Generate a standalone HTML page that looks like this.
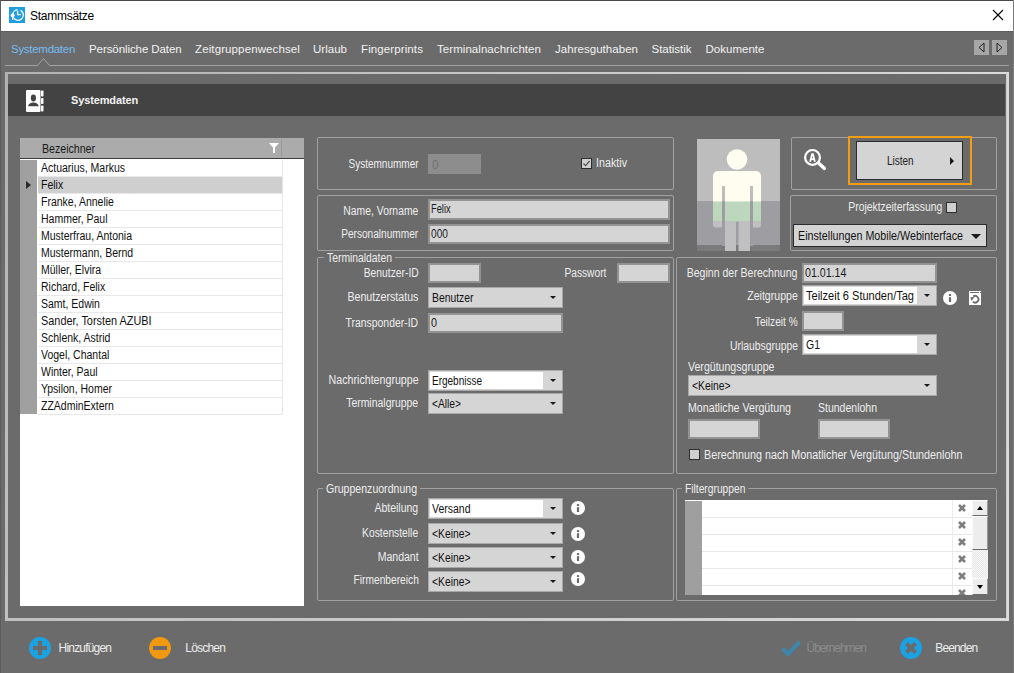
<!DOCTYPE html>
<html><head><meta charset="utf-8"><style>
html,body{margin:0;padding:0;width:1014px;height:673px;overflow:hidden;background:#6b6b6b}
body{position:relative;font-family:"Liberation Sans",sans-serif}
body>div,body>span,body>svg{position:absolute;box-sizing:content-box}
.t{white-space:nowrap;line-height:16px}
</style></head><body>
<div style="left:0px;top:0px;width:1014px;height:673px;background:#6b6b6b"></div>
<div style="left:0px;top:0px;width:1014px;height:1px;background:#4a4a4a"></div>
<div style="left:0px;top:0px;width:1px;height:673px;background:#5c5c5c"></div>
<div style="left:1013px;top:0px;width:1px;height:673px;background:#7c7c7c"></div>
<div style="left:1px;top:1px;width:1012px;height:30px;background:#ffffff"></div>
<div style="left:1px;top:31px;width:1012px;height:1px;background:#5f5f5f"></div>
<svg style="left:9px;top:7px" width="16" height="16" viewBox="0 0 16 16"><rect width="16" height="16" fill="#1e9ee0"/><circle cx="9" cy="8" r="5.3" fill="none" stroke="#fff" stroke-width="1.2" stroke-dasharray="24 3"/><path d="M8.6 3.8V7.6H11.8" fill="none" stroke="#fff" stroke-width="1.3"/><circle cx="3.6" cy="8.2" r="2" fill="#fff"/><rect x="3.1" y="9.5" width="1" height="3.5" fill="#fff"/></svg>
<span class="t" style="top:8px;font-size:12px;color:#000;letter-spacing:-0.269px;left:30px;">Stammsätze</span>
<svg style="left:992px;top:9px" width="12" height="12" viewBox="0 0 12 12"><path d="M1 1L11 11M11 1L1 11" stroke="#000" stroke-width="1.1"/></svg>
<span class="t" style="top:41px;font-size:11.5px;color:#74bdf2;letter-spacing:-0.283px;left:11px;">Systemdaten</span>
<span class="t" style="top:41px;font-size:11.5px;color:#f2f2f2;letter-spacing:-0.080px;left:89px;">Persönliche Daten</span>
<span class="t" style="top:41px;font-size:11.5px;color:#f2f2f2;letter-spacing:0.116px;left:195px;">Zeitgruppenwechsel</span>
<span class="t" style="top:41px;font-size:11.5px;color:#f2f2f2;letter-spacing:0.021px;left:313px;">Urlaub</span>
<span class="t" style="top:41px;font-size:11.5px;color:#f2f2f2;letter-spacing:0.107px;left:361px;">Fingerprints</span>
<span class="t" style="top:41px;font-size:11.5px;color:#f2f2f2;letter-spacing:0.058px;left:437px;">Terminalnachrichten</span>
<span class="t" style="top:41px;font-size:11.5px;color:#f2f2f2;letter-spacing:0.037px;left:555px;">Jahresguthaben</span>
<span class="t" style="top:41px;font-size:11.5px;color:#f2f2f2;letter-spacing:-0.029px;left:651.5px;">Statistik</span>
<span class="t" style="top:41px;font-size:11.5px;color:#f2f2f2;letter-spacing:0.022px;left:705.5px;">Dokumente</span>
<svg style="left:0;top:55px" width="1014" height="14" viewBox="0 0 1014 14"><path d="M5 10.5H37.5L43.5 3.5L49.5 10.5H1009" fill="none" stroke="#a2a2a2" stroke-width="1"/></svg>
<svg style="left:974px;top:40px" width="15" height="15" viewBox="0 0 15 15"><rect width="15" height="15" fill="#a6a6a6"/><path d="M10 3L5 7.5L10 12Z" fill="none" stroke="#222" stroke-width="1"/></svg>
<svg style="left:992px;top:40px" width="15" height="15" viewBox="0 0 15 15"><rect width="15" height="15" fill="#a6a6a6"/><path d="M5 3L10 7.5L5 12Z" fill="none" stroke="#222" stroke-width="1"/></svg>
<div style="left:5px;top:72px;width:1004px;height:2px;background:linear-gradient(90deg,#b2b2b2,#dadada)"></div>
<div style="left:5px;top:618px;width:1004px;height:3px;background:linear-gradient(90deg,#c0c0c0,#dadada)"></div>
<div style="left:5px;top:72px;width:3px;height:549px;background:linear-gradient(180deg,#b2b2b2,#c0c0c0)"></div>
<div style="left:1006px;top:72px;width:3px;height:549px;background:linear-gradient(180deg,#d8d8d8,#dcdcdc)"></div>
<div style="left:1006px;top:74px;width:1px;height:544px;background:#cacaca"></div>
<div style="left:8px;top:84px;width:997px;height:32px;background:#434343"></div>
<svg style="left:25px;top:89px" width="20" height="24" viewBox="0 0 20 24"><rect x="1" y="1" width="14.5" height="22" rx="1" fill="#fff"/><rect x="16" y="1.5" width="2.5" height="6" rx="0.8" fill="#fff"/><rect x="16" y="9" width="2.5" height="6" rx="0.8" fill="#fff"/><rect x="16" y="16.5" width="2.5" height="6" rx="0.8" fill="#fff"/><ellipse cx="8.4" cy="9" rx="2.6" ry="3.4" fill="#434343"/><path d="M3 17.2C3.8 14.5 5.5 13.4 8.4 13.4C11.3 13.4 13 14.5 13.8 17.2Z" fill="#434343"/></svg>
<span class="t" style="top:92px;font-size:11px;color:#f2f2f2;font-weight:bold;letter-spacing:-0.133px;left:71px;">Systemdaten</span>
<div style="left:20px;top:138px;width:284px;height:468px;background:#fff"></div>
<div style="left:20px;top:138px;width:284px;height:20px;background:#ababab"></div>
<div style="left:281px;top:139px;width:1px;height:18px;background:#9a9a9a"></div>
<div style="left:20px;top:158px;width:284px;height:1px;background:#3a3a3a"></div>
<svg style="left:269px;top:143px" width="10" height="10" viewBox="0 0 10 10"><path d="M0 0H10L6 4.5V10H4V4.5Z" fill="#fff"/></svg>
<span class="t" style="top:141px;font-size:12px;color:#1a1a1a;transform:scaleX(0.8828);transform-origin:left top;left:42px;">Bezeichner</span>
<div style="left:20px;top:160px;width:17px;height:254px;background:#a0a0a0"></div>
<div style="left:282px;top:160px;width:1px;height:254px;background:#e6e6e6"></div>
<div style="left:38px;top:176px;width:244px;height:1px;background:#e8e8e8"></div>
<span class="t" style="top:160px;font-size:12px;color:#111;transform:scaleX(0.8750);transform-origin:left top;left:41px;">Actuarius, Markus</span>
<div style="left:38px;top:177px;width:244px;height:16px;background:#cfcfcf"></div>
<div style="left:38px;top:193px;width:244px;height:1px;background:#e8e8e8"></div>
<span class="t" style="top:177px;font-size:12px;color:#111;transform:scaleX(0.8750);transform-origin:left top;left:41px;">Felix</span>
<div style="left:38px;top:210px;width:244px;height:1px;background:#e8e8e8"></div>
<span class="t" style="top:194px;font-size:12px;color:#111;transform:scaleX(0.8750);transform-origin:left top;left:41px;">Franke, Annelie</span>
<div style="left:38px;top:227px;width:244px;height:1px;background:#e8e8e8"></div>
<span class="t" style="top:211px;font-size:12px;color:#111;transform:scaleX(0.8750);transform-origin:left top;left:41px;">Hammer, Paul</span>
<div style="left:38px;top:244px;width:244px;height:1px;background:#e8e8e8"></div>
<span class="t" style="top:228px;font-size:12px;color:#111;transform:scaleX(0.8749);transform-origin:left top;left:41px;">Musterfrau, Antonia</span>
<div style="left:38px;top:261px;width:244px;height:1px;background:#e8e8e8"></div>
<span class="t" style="top:245px;font-size:12px;color:#111;transform:scaleX(0.8749);transform-origin:left top;left:41px;">Mustermann, Bernd</span>
<div style="left:38px;top:278px;width:244px;height:1px;background:#e8e8e8"></div>
<span class="t" style="top:262px;font-size:12px;color:#111;transform:scaleX(0.8750);transform-origin:left top;left:41px;">Müller, Elvira</span>
<div style="left:38px;top:295px;width:244px;height:1px;background:#e8e8e8"></div>
<span class="t" style="top:279px;font-size:12px;color:#111;transform:scaleX(0.8750);transform-origin:left top;left:41px;">Richard, Felix</span>
<div style="left:38px;top:312px;width:244px;height:1px;background:#e8e8e8"></div>
<span class="t" style="top:296px;font-size:12px;color:#111;transform:scaleX(0.8750);transform-origin:left top;left:41px;">Samt, Edwin</span>
<div style="left:38px;top:329px;width:244px;height:1px;background:#e8e8e8"></div>
<span class="t" style="top:313px;font-size:12px;color:#111;transform:scaleX(0.9077);transform-origin:left top;left:41px;">Sander, Torsten AZUBI</span>
<div style="left:38px;top:346px;width:244px;height:1px;background:#e8e8e8"></div>
<span class="t" style="top:330px;font-size:12px;color:#111;transform:scaleX(0.8750);transform-origin:left top;left:41px;">Schlenk, Astrid</span>
<div style="left:38px;top:363px;width:244px;height:1px;background:#e8e8e8"></div>
<span class="t" style="top:347px;font-size:12px;color:#111;transform:scaleX(0.8750);transform-origin:left top;left:41px;">Vogel, Chantal</span>
<div style="left:38px;top:380px;width:244px;height:1px;background:#e8e8e8"></div>
<span class="t" style="top:364px;font-size:12px;color:#111;transform:scaleX(0.8750);transform-origin:left top;left:41px;">Winter, Paul</span>
<div style="left:38px;top:397px;width:244px;height:1px;background:#e8e8e8"></div>
<span class="t" style="top:381px;font-size:12px;color:#111;transform:scaleX(0.8750);transform-origin:left top;left:41px;">Ypsilon, Homer</span>
<div style="left:38px;top:414px;width:244px;height:1px;background:#e8e8e8"></div>
<span class="t" style="top:398px;font-size:12px;color:#111;transform:scaleX(0.8750);transform-origin:left top;left:41px;">ZZAdminExtern</span>
<div style="left:26px;top:181px;width:0;height:0;border-top:4.5px solid transparent;border-bottom:4.5px solid transparent;border-left:5px solid #2a2a2a"></div>
<div style="left:317px;top:137px;width:355px;height:51px;border:1px solid #a0a0a0;border-radius:2px"></div>
<span class="t" style="top:156px;font-size:12.5px;color:#eeeeee;transform:scaleX(0.7998);transform-origin:right top;right:595.5px;">Systemnummer</span>
<div style="left:428px;top:154px;width:53px;height:20px;background:#8d8d8d"></div>
<span class="t" style="top:157px;font-size:12px;color:#727272;left:432px;">0</span>
<div style="left:581px;top:158px;width:9px;height:9px;border:1px solid #2e2e2e;background:#cfcfcf"></div>
<svg style="left:582px;top:159px" width="9" height="9" viewBox="0 0 9 9"><path d="M1.5 4.5L3.6 6.6L7.6 2" fill="none" stroke="#555" stroke-width="1.2"/></svg>
<span class="t" style="top:155px;font-size:12.5px;color:#eeeeee;transform:scaleX(0.8581);transform-origin:left top;left:595.5px;">Inaktiv</span>
<div style="left:317px;top:195px;width:355px;height:54px;border:1px solid #a0a0a0;border-radius:2px"></div>
<span class="t" style="top:203px;font-size:12.5px;color:#eeeeee;transform:scaleX(0.8304);transform-origin:right top;right:595.5px;">Name, Vorname</span>
<div style="left:428px;top:199px;width:238px;height:17px;border:2px solid #939393;background:#d5d5d5"></div>
<span class="t" style="top:201px;font-size:12px;color:#1a1a1a;transform:scaleX(0.7737);transform-origin:left top;left:431px;">Felix</span>
<span class="t" style="top:226px;font-size:12.5px;color:#eeeeee;transform:scaleX(0.8090);transform-origin:right top;right:595.5px;">Personalnummer</span>
<div style="left:428px;top:224px;width:238px;height:16px;border:2px solid #939393;background:#d5d5d5"></div>
<span class="t" style="top:226px;font-size:12px;color:#1a1a1a;transform:scaleX(0.8491);transform-origin:left top;left:431px;">000</span>
<div style="left:317px;top:257px;width:355px;height:215px;border:1px solid #a0a0a0;border-radius:2px"></div>
<div style="left:324px;top:256px;width:71px;height:3px;background:#6b6b6b"></div>
<span class="t" style="top:250px;font-size:12.5px;color:#eeeeee;transform:scaleX(0.8279);transform-origin:left top;left:327px;">Terminaldaten</span>
<span class="t" style="top:265px;font-size:12.5px;color:#eeeeee;transform:scaleX(0.8247);transform-origin:right top;right:595.5px;">Benutzer-ID</span>
<div style="left:428px;top:263px;width:49px;height:16px;border:2px solid #939393;background:#d5d5d5"></div>
<span class="t" style="top:265px;font-size:12.5px;color:#eeeeee;transform:scaleX(0.8171);transform-origin:right top;right:407.5px;">Passwort</span>
<div style="left:617px;top:263px;width:49px;height:16px;border:2px solid #939393;background:#d5d5d5"></div>
<span class="t" style="top:289px;font-size:12.5px;color:#eeeeee;transform:scaleX(0.8515);transform-origin:right top;right:595.5px;">Benutzerstatus</span>
<div style="left:428px;top:287px;width:133px;height:19px;border:1px solid #a8a8a8;background:#d5d5d5"></div>
<span class="t" style="top:290px;font-size:12px;color:#111;transform:scaleX(0.8640);transform-origin:left top;left:432px;">Benutzer</span>
<div style="left:550px;top:296px;width:0;height:0;border-left:3px solid transparent;border-right:3px solid transparent;border-top:3px solid #1a1a1a"></div>
<span class="t" style="top:315px;font-size:12.5px;color:#eeeeee;transform:scaleX(0.8327);transform-origin:right top;right:595.5px;">Transponder-ID</span>
<div style="left:428px;top:313px;width:131px;height:16px;border:2px solid #939393;background:#d5d5d5"></div>
<span class="t" style="top:315px;font-size:12px;color:#1a1a1a;transform:scaleX(0.8991);transform-origin:left top;left:431px;">0</span>
<span class="t" style="top:372px;font-size:12.5px;color:#eeeeee;transform:scaleX(0.8521);transform-origin:right top;right:595.5px;">Nachrichtengruppe</span>
<div style="left:428px;top:370px;width:133px;height:19px;border:1px solid #a8a8a8;background:#d5d5d5"></div>
<div style="left:430px;top:372px;width:113px;height:17px;background:#fff"></div>
<span class="t" style="top:373px;font-size:12px;color:#111;transform:scaleX(0.8329);transform-origin:left top;left:432px;">Ergebnisse</span>
<div style="left:550px;top:379px;width:0;height:0;border-left:3px solid transparent;border-right:3px solid transparent;border-top:3px solid #1a1a1a"></div>
<span class="t" style="top:395px;font-size:12.5px;color:#eeeeee;transform:scaleX(0.8357);transform-origin:right top;right:595.5px;">Terminalgruppe</span>
<div style="left:428px;top:393px;width:133px;height:19px;border:1px solid #a8a8a8;background:#d5d5d5"></div>
<span class="t" style="top:396px;font-size:12px;color:#111;transform:scaleX(0.8523);transform-origin:left top;left:432px;">&lt;Alle&gt;</span>
<div style="left:550px;top:402px;width:0;height:0;border-left:3px solid transparent;border-right:3px solid transparent;border-top:3px solid #1a1a1a"></div>
<div style="left:317px;top:488px;width:355px;height:111px;border:1px solid #a0a0a0;border-radius:2px"></div>
<div style="left:323px;top:487px;width:97px;height:3px;background:#6b6b6b"></div>
<span class="t" style="top:481px;font-size:12.5px;color:#eeeeee;transform:scaleX(0.8448);transform-origin:left top;left:326px;">Gruppenzuordnung</span>
<span class="t" style="top:500px;font-size:12.5px;color:#eeeeee;transform:scaleX(0.8384);transform-origin:right top;right:595.5px;">Abteilung</span>
<div style="left:428px;top:498px;width:133px;height:19px;border:1px solid #a8a8a8;background:#d5d5d5"></div>
<div style="left:430px;top:500px;width:113px;height:17px;background:#fff"></div>
<span class="t" style="top:501px;font-size:12px;color:#111;transform:scaleX(0.8743);transform-origin:left top;left:432px;">Versand</span>
<div style="left:550px;top:507px;width:0;height:0;border-left:3px solid transparent;border-right:3px solid transparent;border-top:3px solid #1a1a1a"></div>
<svg style="left:571px;top:501px" width="14" height="14" viewBox="0 0 14 14"><circle cx="7" cy="7" r="7" fill="#fff"/><rect x="5.9" y="3.1" width="2.2" height="1.9" fill="#6b6b6b"/><rect x="5.9" y="6.2" width="2.2" height="4.8" fill="#6b6b6b"/></svg>
<span class="t" style="top:525px;font-size:12.5px;color:#eeeeee;transform:scaleX(0.8224);transform-origin:right top;right:595.5px;">Kostenstelle</span>
<div style="left:428px;top:523px;width:133px;height:19px;border:1px solid #a8a8a8;background:#d5d5d5"></div>
<span class="t" style="top:526px;font-size:12px;color:#111;transform:scaleX(0.8612);transform-origin:left top;left:432px;">&lt;Keine&gt;</span>
<div style="left:550px;top:532px;width:0;height:0;border-left:3px solid transparent;border-right:3px solid transparent;border-top:3px solid #1a1a1a"></div>
<svg style="left:571px;top:527px" width="14" height="14" viewBox="0 0 14 14"><circle cx="7" cy="7" r="7" fill="#fff"/><rect x="5.9" y="3.1" width="2.2" height="1.9" fill="#6b6b6b"/><rect x="5.9" y="6.2" width="2.2" height="4.8" fill="#6b6b6b"/></svg>
<span class="t" style="top:549px;font-size:12.5px;color:#eeeeee;transform:scaleX(0.8429);transform-origin:right top;right:595.5px;">Mandant</span>
<div style="left:428px;top:547px;width:133px;height:19px;border:1px solid #a8a8a8;background:#d5d5d5"></div>
<span class="t" style="top:550px;font-size:12px;color:#111;transform:scaleX(0.8612);transform-origin:left top;left:432px;">&lt;Keine&gt;</span>
<div style="left:550px;top:556px;width:0;height:0;border-left:3px solid transparent;border-right:3px solid transparent;border-top:3px solid #1a1a1a"></div>
<svg style="left:571px;top:550px" width="14" height="14" viewBox="0 0 14 14"><circle cx="7" cy="7" r="7" fill="#fff"/><rect x="5.9" y="3.1" width="2.2" height="1.9" fill="#6b6b6b"/><rect x="5.9" y="6.2" width="2.2" height="4.8" fill="#6b6b6b"/></svg>
<span class="t" style="top:572px;font-size:12.5px;color:#eeeeee;transform:scaleX(0.8187);transform-origin:right top;right:595.5px;">Firmenbereich</span>
<div style="left:428px;top:571px;width:133px;height:19px;border:1px solid #a8a8a8;background:#d5d5d5"></div>
<span class="t" style="top:574px;font-size:12px;color:#111;transform:scaleX(0.8612);transform-origin:left top;left:432px;">&lt;Keine&gt;</span>
<div style="left:550px;top:580px;width:0;height:0;border-left:3px solid transparent;border-right:3px solid transparent;border-top:3px solid #1a1a1a"></div>
<svg style="left:571px;top:572px" width="14" height="14" viewBox="0 0 14 14"><circle cx="7" cy="7" r="7" fill="#fff"/><rect x="5.9" y="3.1" width="2.2" height="1.9" fill="#6b6b6b"/><rect x="5.9" y="6.2" width="2.2" height="4.8" fill="#6b6b6b"/></svg>
<div style="left:697px;top:139px;width:83px;height:62px;background:#bdbdbd"></div>
<div style="left:697px;top:201px;width:83px;height:44px;background:#9e9ea2"></div>
<div style="left:697px;top:245px;width:83px;height:6px;background:#7b7b7b"></div>
<svg style="left:697px;top:139px" width="83" height="112" viewBox="0 0 83 112"><circle cx="40" cy="20.5" r="10.3" fill="#fffcf0"/><path d="M16 37.5Q16 32 21.5 32H58.5Q64 32 64 37.5V63H16Z" fill="#fffcf0"/><rect x="16" y="62.5" width="48" height="20" fill="#bcd7bc"/><path d="M16 82H26V86Q26 88.5 23.5 88.5H18.5Q16 88.5 16 86Z" fill="#c0c0c0"/><path d="M54 82H64V86Q64 88.5 61.5 88.5H56.5Q54 88.5 54 86Z" fill="#c0c0c0"/><rect x="25" y="47" width="3" height="15.5" fill="#bdbdbd"/><rect x="25" y="62" width="3" height="45" fill="#9e9ea2"/><rect x="53" y="47" width="3" height="15.5" fill="#bdbdbd"/><rect x="53" y="62" width="3" height="45" fill="#9e9ea2"/><rect x="28" y="82" width="11" height="30" fill="#c0c0c0"/><rect x="41.5" y="82" width="11.5" height="30" fill="#c0c0c0"/></svg>
<div style="left:791px;top:137px;width:204px;height:51px;border:1px solid #a0a0a0;border-radius:2px"></div>
<svg style="left:802px;top:148px" width="26" height="25" viewBox="0 0 26 25"><circle cx="10.5" cy="9.4" r="7.4" fill="none" stroke="#fff" stroke-width="2.2"/><path d="M17 15.5L22.2 20.3" stroke="#fff" stroke-width="3.6" stroke-linecap="round"/><path d="M7.2 13.8L9.4 5.2H11.6L13.8 13.8H11.9L11.4 11.9H9.6L9.1 13.8ZM9.95 10.3H11.05L10.5 7.8Z" fill="#fff" fill-rule="evenodd"/></svg>
<div style="left:848px;top:136px;width:120px;height:45px;border:2px solid #f29d12"></div>
<div style="left:856px;top:141px;width:105px;height:37px;border:1px solid #2b2b2b;background:#d4d4d4"></div>
<span class="t" style="top:153px;font-size:12px;color:#222;transform:scaleX(0.8276);transform-origin:left top;left:886.5px;">Listen</span>
<div style="left:950px;top:157px;width:0;height:0;border-top:4px solid transparent;border-bottom:4px solid transparent;border-left:4px solid #1a1a1a"></div>
<div style="left:790px;top:195px;width:205px;height:54px;border:1px solid #a0a0a0;border-radius:2px"></div>
<span class="t" style="top:199px;font-size:12.5px;color:#eeeeee;transform:scaleX(0.8300);transform-origin:right top;right:72.0px;">Projektzeiterfassung</span>
<div style="left:946px;top:202px;width:9px;height:9px;border:1px solid #2e2e2e;background:#cfcfcf"></div>
<div style="left:793px;top:224px;width:192px;height:21px;border:1px solid #2b2b2b;background:#d4d4d4"></div>
<span class="t" style="top:228px;font-size:12.5px;color:#111;transform:scaleX(0.8583);transform-origin:left top;left:797.5px;">Einstellungen Mobile/Webinterface</span>
<div style="left:971px;top:234px;width:0;height:0;border-left:5px solid transparent;border-right:5px solid transparent;border-top:5px solid #1a1a1a"></div>
<div style="left:676px;top:257px;width:319px;height:215px;border:1px solid #a0a0a0;border-radius:2px"></div>
<span class="t" style="top:265px;font-size:12.5px;color:#eeeeee;transform:scaleX(0.8421);transform-origin:right top;right:216.5px;">Beginn der Berechnung</span>
<div style="left:802px;top:263px;width:131px;height:16px;border:2px solid #939393;background:#d5d5d5"></div>
<span class="t" style="top:265px;font-size:12px;color:#1a1a1a;transform:scaleX(0.8863);transform-origin:left top;left:805px;">01.01.14</span>
<span class="t" style="top:288px;font-size:12.5px;color:#eeeeee;transform:scaleX(0.8451);transform-origin:right top;right:216.5px;">Zeitgruppe</span>
<div style="left:802px;top:285px;width:133px;height:19px;border:1px solid #a8a8a8;background:#d5d5d5"></div>
<div style="left:804px;top:287px;width:113px;height:17px;background:#fff"></div>
<span class="t" style="top:288px;font-size:12px;color:#111;transform:scaleX(0.9199);transform-origin:left top;left:806px;">Teilzeit 6 Stunden/Tag</span>
<div style="left:924px;top:294px;width:0;height:0;border-left:3px solid transparent;border-right:3px solid transparent;border-top:3px solid #1a1a1a"></div>
<svg style="left:943px;top:291px" width="14" height="14" viewBox="0 0 14 14"><circle cx="7" cy="7" r="7" fill="#fff"/><rect x="5.9" y="3.1" width="2.2" height="1.9" fill="#6b6b6b"/><rect x="5.9" y="6.2" width="2.2" height="4.8" fill="#6b6b6b"/></svg>
<svg style="left:969px;top:291px" width="12" height="14" viewBox="0 0 12 14"><rect width="12" height="14" fill="#fff"/><rect x="1" y="1" width="9" height="1" fill="#6b6b6b"/><rect x="11" y="1" width="1" height="1" fill="#6b6b6b"/><path d="M4.2 5.6A3.3 3.3 0 1 1 3.8 10.6" fill="none" stroke="#6b6b6b" stroke-width="1.8"/><path d="M1.3 6.2L5.4 6L2.6 10Z" fill="#6b6b6b"/></svg>
<span class="t" style="top:314px;font-size:12.5px;color:#eeeeee;transform:scaleX(0.8145);transform-origin:right top;right:216.5px;">Teilzeit %</span>
<div style="left:802px;top:311px;width:38px;height:16px;border:2px solid #939393;background:#d5d5d5"></div>
<span class="t" style="top:338px;font-size:12.5px;color:#eeeeee;transform:scaleX(0.8294);transform-origin:right top;right:216.5px;">Urlaubsgruppe</span>
<div style="left:802px;top:334px;width:133px;height:19px;border:1px solid #a8a8a8;background:#d5d5d5"></div>
<div style="left:804px;top:336px;width:113px;height:17px;background:#fff"></div>
<span class="t" style="top:337px;font-size:12px;color:#111;transform:scaleX(0.8746);transform-origin:left top;left:806px;">G1</span>
<div style="left:924px;top:343px;width:0;height:0;border-left:3px solid transparent;border-right:3px solid transparent;border-top:3px solid #1a1a1a"></div>
<span class="t" style="top:359px;font-size:12.5px;color:#eeeeee;transform:scaleX(0.8467);transform-origin:left top;left:688px;">Vergütungsgruppe</span>
<div style="left:688px;top:375px;width:247px;height:19px;border:1px solid #a8a8a8;background:#d5d5d5"></div>
<span class="t" style="top:378px;font-size:12px;color:#111;transform:scaleX(0.8612);transform-origin:left top;left:692px;">&lt;Keine&gt;</span>
<div style="left:924px;top:384px;width:0;height:0;border-left:3px solid transparent;border-right:3px solid transparent;border-top:3px solid #1a1a1a"></div>
<span class="t" style="top:400px;font-size:12.5px;color:#eeeeee;transform:scaleX(0.8518);transform-origin:left top;left:688px;">Monatliche Vergütung</span>
<span class="t" style="top:400px;font-size:12.5px;color:#eeeeee;transform:scaleX(0.8405);transform-origin:left top;left:818px;">Stundenlohn</span>
<div style="left:688px;top:419px;width:68px;height:16px;border:2px solid #939393;background:#d5d5d5"></div>
<div style="left:818px;top:419px;width:68px;height:16px;border:2px solid #939393;background:#d5d5d5"></div>
<div style="left:689px;top:449px;width:9px;height:9px;border:1px solid #2e2e2e;background:#cfcfcf"></div>
<span class="t" style="top:447px;font-size:12.5px;color:#eeeeee;transform:scaleX(0.8607);transform-origin:left top;left:704px;">Berechnung nach Monatlicher Vergütung/Stundenlohn</span>
<div style="left:676px;top:488px;width:319px;height:111px;border:1px solid #a0a0a0;border-radius:2px"></div>
<div style="left:682px;top:487px;width:66.4px;height:3px;background:#6b6b6b"></div>
<span class="t" style="top:481px;font-size:12.5px;color:#eeeeee;transform:scaleX(0.8201);transform-origin:left top;left:685px;">Filtergruppen</span>
<div style="left:685px;top:500px;width:303px;height:95px;background:#fff"></div>
<div style="left:685px;top:501px;width:17px;height:94px;background:#9f9f9f"></div>
<div style="left:952px;top:500px;width:1px;height:95px;background:#ececec"></div>
<div style="left:702px;top:517px;width:270px;height:1px;background:#e8e8e8"></div>
<div style="left:702px;top:534px;width:270px;height:1px;background:#e8e8e8"></div>
<div style="left:702px;top:551px;width:270px;height:1px;background:#e8e8e8"></div>
<div style="left:702px;top:568px;width:270px;height:1px;background:#e8e8e8"></div>
<div style="left:702px;top:585px;width:270px;height:1px;background:#e8e8e8"></div>
<svg style="left:957px;top:500px" width="10" height="95" viewBox="0 0 10 95"><path d="M2 5L8 11M8 5L2 11" stroke="#7e7e7e" stroke-width="2.6"/><path d="M2 22L8 28M8 22L2 28" stroke="#7e7e7e" stroke-width="2.6"/><path d="M2 39L8 45M8 39L2 45" stroke="#7e7e7e" stroke-width="2.6"/><path d="M2 56L8 62M8 56L2 62" stroke="#7e7e7e" stroke-width="2.6"/><path d="M2 73L8 79M8 73L2 79" stroke="#7e7e7e" stroke-width="2.6"/><path d="M2 90L8 96M8 90L2 96" stroke="#7e7e7e" stroke-width="2.6"/></svg>
<div style="left:972px;top:500px;width:16px;height:95px;background:#f2f2f2"></div>
<div style="left:972px;top:550px;width:16px;height:28px;background:repeating-conic-gradient(#e6e6e6 0 25%,#fafafa 0 50%) 0 0/2px 2px"></div>
<div style="left:972px;top:500px;width:14px;height:14px;border-style:solid;border-width:1px 1px 1px 1px;border-color:#fdfdfd #9a9a9a #6a6a6a #fdfdfd;background:#ededed"></div>
<div style="left:972px;top:516px;width:14px;height:32px;border-style:solid;border-width:1px 1px 1px 1px;border-color:#fdfdfd #9a9a9a #6a6a6a #fdfdfd;background:#ededed"></div>
<div style="left:972px;top:578px;width:14px;height:15px;border-style:solid;border-width:1px 1px 1px 1px;border-color:#fdfdfd #9a9a9a #6a6a6a #fdfdfd;background:#ededed"></div>
<div style="left:977px;top:506px;width:0;height:0;border-left:3.5px solid transparent;border-right:3.5px solid transparent;border-bottom:4px solid #000"></div>
<div style="left:977px;top:585px;width:0;height:0;border-left:3.5px solid transparent;border-right:3.5px solid transparent;border-top:4px solid #000"></div>
<svg style="left:29px;top:637px" width="22" height="22" viewBox="0 0 22 22"><circle cx="11" cy="11" r="11" fill="#1ca1e2"/><path d="M4 11H18M11 4V18" stroke="#6b6b6b" stroke-width="4"/></svg>
<span class="t" style="top:640px;font-size:12px;color:#ececec;letter-spacing:-0.821px;left:58.6px;">Hinzufügen</span>
<svg style="left:149px;top:637px" width="22" height="22" viewBox="0 0 22 22"><circle cx="11" cy="11" r="11" fill="#f0980f"/><path d="M4 11H18" stroke="#6b6b6b" stroke-width="4"/></svg>
<span class="t" style="top:640px;font-size:12px;color:#ececec;letter-spacing:-0.810px;left:185.3px;">Löschen</span>
<svg style="left:781px;top:640px" width="20" height="16" viewBox="0 0 20 16"><path d="M1.5 8.5L7 14L18.5 2" fill="none" stroke="#3f86ad" stroke-width="4"/></svg>
<span class="t" style="top:640px;font-size:12px;color:#8c8c8c;letter-spacing:-0.997px;left:806.5px;">Übernehmen</span>
<svg style="left:900px;top:637px" width="22" height="22" viewBox="0 0 22 22"><circle cx="11" cy="11" r="11" fill="#1ca1e2"/><path d="M6.5 6.5L15.5 15.5M15.5 6.5L6.5 15.5" stroke="#6b6b6b" stroke-width="4"/></svg>
<span class="t" style="top:640px;font-size:12px;color:#ececec;letter-spacing:-0.864px;left:935.3px;">Beenden</span>
</body></html>
